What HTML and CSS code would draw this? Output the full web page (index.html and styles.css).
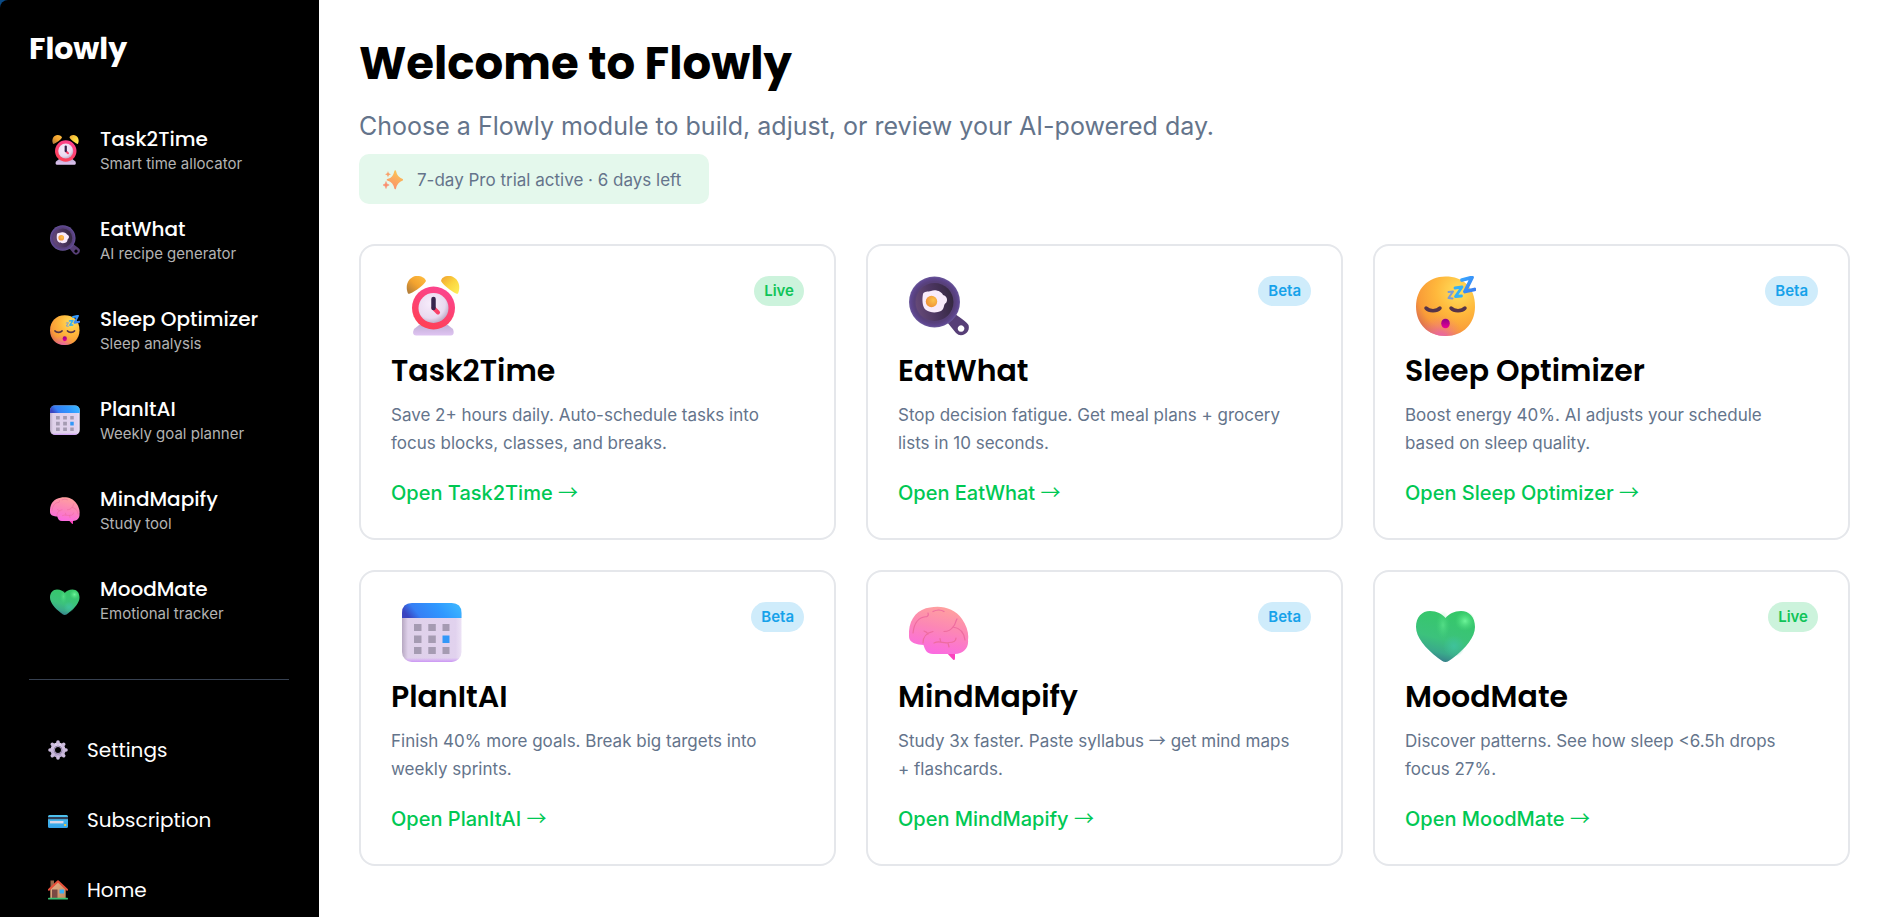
FILE: index.html
```html
<!DOCTYPE html>
<html lang="en">
<head>
<meta charset="UTF-8">
<meta name="viewport" content="width=device-width, initial-scale=1.0">
<title>Flowly</title>
<link rel="stylesheet" href="styles.css">
</head>
<body>

<!-- Icon definitions -->
<svg class="icon-defs" aria-hidden="true">
    <defs>
        <linearGradient id="bellLeft" x1="0" y1="1" x2="1" y2="0">
            <stop offset="0" stop-color="#a8783c"/>
            <stop offset="0.5" stop-color="#f3a32f"/>
            <stop offset="1" stop-color="#ffc043"/>
        </linearGradient>
        <linearGradient id="bellRight" x1="0" y1="0" x2="1" y2="1">
            <stop offset="0" stop-color="#f0a030"/>
            <stop offset="0.5" stop-color="#fbd53f"/>
            <stop offset="1" stop-color="#fff05a"/>
        </linearGradient>
        <linearGradient id="clockRing" x1="0.7" y1="0" x2="0.3" y2="1">
            <stop offset="0" stop-color="#fb4490"/>
            <stop offset="1" stop-color="#ff4053"/>
        </linearGradient>
        <radialGradient id="clockFace" cx="0.4" cy="0.35" r="0.7">
            <stop offset="0" stop-color="#f7ecfb"/>
            <stop offset="0.7" stop-color="#e9daf0"/>
            <stop offset="1" stop-color="#b9a4c0"/>
        </radialGradient>
        <linearGradient id="clockBase" x1="0" y1="0" x2="0" y2="1">
            <stop offset="0" stop-color="#bba9cf"/>
            <stop offset="1" stop-color="#dfc4f2"/>
        </linearGradient>
        <radialGradient id="panRim" cx="0.5" cy="0.5" r="0.5">
            <stop offset="0.8" stop-color="#57407a"/>
            <stop offset="0.93" stop-color="#5e468f"/>
            <stop offset="1" stop-color="#6c5b9c"/>
        </radialGradient>
        <linearGradient id="panInner" x1="0" y1="0.6" x2="1" y2="0.4">
            <stop offset="0" stop-color="#664a78"/>
            <stop offset="0.5" stop-color="#4b3560"/>
            <stop offset="1" stop-color="#34283f"/>
        </linearGradient>
        <radialGradient id="yolk" cx="0.65" cy="0.4" r="0.7">
            <stop offset="0" stop-color="#fcc34e"/>
            <stop offset="1" stop-color="#ee8e35"/>
        </radialGradient>
        <radialGradient id="sleepFace" cx="0.72" cy="0.25" r="0.85">
            <stop offset="0" stop-color="#ffe05c"/>
            <stop offset="0.45" stop-color="#ffb83c"/>
            <stop offset="0.8" stop-color="#f99c38"/>
            <stop offset="1" stop-color="#dc6f50"/>
        </radialGradient>
        <radialGradient id="sleepGlow" cx="0.42" cy="1.05" r="0.4">
            <stop offset="0" stop-color="#e85cc0"/>
            <stop offset="1" stop-color="#f07a80" stop-opacity="0"/>
        </radialGradient>
        <linearGradient id="mouth" x1="0" y1="0" x2="0" y2="1">
            <stop offset="0" stop-color="#8f0087"/>
            <stop offset="1" stop-color="#ea0095"/>
        </linearGradient>
        <linearGradient id="zed" x1="0" y1="0" x2="1" y2="1">
            <stop offset="0" stop-color="#38a6ff"/>
            <stop offset="1" stop-color="#3b7cf0"/>
        </linearGradient>
        <linearGradient id="calTop" x1="0" y1="0.4" x2="1" y2="0.2">
            <stop offset="0" stop-color="#3a44c0"/>
            <stop offset="0.2" stop-color="#367ff5"/>
            <stop offset="0.6" stop-color="#2f98ff"/>
            <stop offset="1" stop-color="#3db8ff"/>
        </linearGradient>
        <linearGradient id="calSide" x1="0" y1="0" x2="1" y2="0">
            <stop offset="0" stop-color="#b7a8c2"/>
            <stop offset="0.1" stop-color="#dfd1ea"/>
            <stop offset="0.9" stop-color="#e1d2ee"/>
            <stop offset="1" stop-color="#ece2f5"/>
        </linearGradient>
        <linearGradient id="calFoot" x1="0" y1="0" x2="0" y2="1">
            <stop offset="0.93" stop-color="#cf9df5" stop-opacity="0"/>
            <stop offset="1" stop-color="#cb95f5"/>
        </linearGradient>
        <linearGradient id="brain" x1="0.65" y1="0" x2="0.35" y2="1">
            <stop offset="0" stop-color="#ffa29d"/>
            <stop offset="0.45" stop-color="#fc87b5"/>
            <stop offset="1" stop-color="#fb69e3"/>
        </linearGradient>
        <linearGradient id="heart" x1="0.6" y1="0" x2="0.3" y2="1">
            <stop offset="0" stop-color="#35c868"/>
            <stop offset="0.55" stop-color="#3cc27c"/>
            <stop offset="0.8" stop-color="#3aa98b"/>
            <stop offset="1" stop-color="#37758a"/>
        </linearGradient>
        <radialGradient id="heartShine" cx="0.5" cy="0.5" r="0.5">
            <stop offset="0" stop-color="#6ef59a"/>
            <stop offset="1" stop-color="#4bdc7c" stop-opacity="0"/>
        </radialGradient>
        <radialGradient id="heartDeep" cx="0.5" cy="0.5" r="0.5">
            <stop offset="0" stop-color="#3fc29b"/>
            <stop offset="1" stop-color="#3fc29b" stop-opacity="0"/>
        </radialGradient>
        <linearGradient id="gear" x1="0" y1="0" x2="0" y2="1">
            <stop offset="0" stop-color="#dccdea"/>
            <stop offset="1" stop-color="#b5a3cb"/>
        </linearGradient>
        <linearGradient id="cardBlue" x1="0" y1="0" x2="0" y2="1">
            <stop offset="0" stop-color="#4fc3ee"/>
            <stop offset="1" stop-color="#35a2e8"/>
        </linearGradient>
        <linearGradient id="houseWall" x1="0" y1="0" x2="1" y2="1">
            <stop offset="0" stop-color="#e9b48a"/>
            <stop offset="1" stop-color="#c08a62"/>
        </linearGradient>
        <linearGradient id="spark" x1="0.7" y1="0" x2="0.3" y2="1">
            <stop offset="0" stop-color="#fbc652"/>
            <stop offset="1" stop-color="#fb8f6c"/>
        </linearGradient>

        <symbol id="icon-clock" viewBox="-4 0 60 60">
            <path d="M17 46 L8 53 Q5.500 59 10 59.500 H45 Q49 59 47 53 L38 46Z" fill="url(#clockBase)"/>
            <path d="M2 17.500 C-2 8 4 0 11 0 C16 0 19 2 20 5 C18 9 10 15 4 17.500 Q2.700 18 2 17.500Z" fill="url(#bellLeft)"/>
            <path d="M52 17.500 C56 8 50 0 43 0 C38 0 35.500 2 35 5 C37 9 45 15 50 17.500 Q51.300 18 52 17.500Z" fill="url(#bellRight)"/>
            <circle cx="27.500" cy="32" r="21.500" fill="url(#clockRing)"/>
            <circle cx="27.500" cy="32" r="15" fill="url(#clockFace)"/>
            <path d="M27.500 32 L32 36.500" stroke="#fa4168" stroke-width="4" stroke-linecap="round"/>
            <path d="M27.500 23 V32" stroke="#37244d" stroke-width="4.500" stroke-linecap="round"/>
        </symbol>

        <symbol id="icon-pan" viewBox="0 0 60 60">
            <path fill-rule="evenodd" d="M38 46 L47 57 Q51 61 56 58 Q61 55 59.500 49 Q58.500 46.500 46 38Z M52 49.200 a3.300 3.300 0 1 0 0.100 0Z" fill="#573f77"/>
            <circle cx="25.500" cy="26" r="25.500" fill="url(#panRim)"/>
            <circle cx="25.500" cy="26" r="19" fill="url(#panInner)"/>
            <path d="M14 18 C15 15 19 16 22 15 C27 13 33 16 34 19 C38 20 39 24 37 27 C34 28 36 33 32 35 C28 37 21 37 17 34 C13 31 13 23 14 18Z" fill="#f8ebfb"/>
            <circle cx="22.500" cy="25.500" r="5.700" fill="url(#yolk)"/>
        </symbol>

        <symbol id="icon-sleep" viewBox="0 0 60 60">
            <path d="M29.500 0.500 C47 0.500 59 11 59 30.500 C59 48 47 60 29.500 60 C12 60 0 48 0 30.500 C0 13 12 0.500 29.500 0.500Z" fill="url(#sleepFace)"/>
            <path d="M29.500 0.500 C47 0.500 59 11 59 30.500 C59 48 47 60 29.500 60 C12 60 0 48 0 30.500 C0 13 12 0.500 29.500 0.500Z" fill="url(#sleepGlow)"/>
            <path d="M10 32 C13 35.500 21 35.500 24 32 M35 32 C38 35.500 46 35.500 49 32" fill="none" stroke="#563448" stroke-width="3.500" stroke-linecap="round"/>
            <ellipse cx="29.500" cy="47.500" rx="4.300" ry="4.800" fill="url(#mouth)"/>
            <path d="M46 4 L56 1.500 L49 15.500 L58.500 13.500" fill="none" stroke="url(#zed)" stroke-width="3.800" stroke-linejoin="round" stroke-linecap="round"/>
            <path d="M39 12 L46 11 L39.500 20.500 L45.500 20" fill="none" stroke="#35b0f5" stroke-width="2.800" stroke-linejoin="round" stroke-linecap="round"/>
            <path d="M32.500 16 L37 15.500 L32.500 22 L36.500 22.500" fill="none" stroke="#7c9bd6" stroke-width="2" stroke-linejoin="round" stroke-linecap="round"/>
        </symbol>

        <symbol id="icon-calendar" viewBox="0 0 60 60">
            <rect x="0" y="1" width="59.500" height="59" rx="10" fill="url(#calSide)"/>
            <rect x="0" y="1" width="59.500" height="59" rx="10" fill="url(#calFoot)"/>
            <path d="M0 16 V11 Q0 1 10 1 H49.500 Q59.500 1 59.500 11 V16Z" fill="url(#calTop)"/>
            <path d="M12 22 h7.500 v7 h-7.500Z M26.300 22 h7.500 v7 h-7.500Z M40.500 22 h7 v7 h-7Z M12 33.500 h7.500 v7.500 h-7.500Z M26.300 33.500 h7.500 v7.500 h-7.500Z M12 45 h7.500 v7 h-7.500Z M26.300 45 h7.500 v7 h-7.500Z M40.500 45 h7 v7 h-7Z" fill="#a59bb2"/>
            <path d="M40.500 33.500 h7 v7.500 h-7Z" fill="#3398f8"/>
        </symbol>

        <symbol id="icon-brain" viewBox="0 0 60 60">
            <path d="M36 49 L44 57.500 Q46 59 46 56 L46 49Z" fill="#fb42bd"/>
            <path d="M0 34 C-1 18 8 7 21 5.500 C32 3 46 6 53 17 C58 24 60 32 59 38 C60 46 54 52 46 52 L24 52 C18 52 16 48 14.500 43 C11 43 8 42 6 41.500 C2 40 0 38 0 34Z" fill="url(#brain)"/>
            <g fill="none" stroke="#ee6c9f" stroke-width="1.200" stroke-linecap="round">
                <path d="M4 31 C5 21 10 15 18 14.500 M18 14.500 Q20 13.500 19 11"/>
                <path d="M24 9.500 Q30 6.500 35 9.500"/>
                <path d="M48 17 C46 20 47 22 44 25 C42 28 38 29.500 35 29.500 M44 25 C51 26 55 30 56 38"/>
                <path d="M14 41 C14 35 17 31 24 29.500 M19 32 Q18 30 15 29"/>
                <path d="M25 41 C31 38 34 42 40 40.500 C44 40.500 47 40 47 36 M32 40 Q31 38 31 36.500 M39 41 L40 45"/>
            </g>
        </symbol>

        <symbol id="icon-heart" viewBox="0 0 60 60">
            <path d="M29.500 60 C27 60 25 58 22 56 C9 46 0 35 0 25 C0 15 6 9 14 9 C21 9 26 12 29.500 16 C33 12 38 9 45 9 C53 9 59 15 59 25 C59 35 50 46 37 56 C34 58 32 60 29.500 60Z" fill="url(#heart)"/>
            <ellipse cx="27" cy="23" rx="7" ry="14" fill="url(#heartShine)" opacity="0.5"/>
            <circle cx="49" cy="19" r="10" fill="url(#heartShine)"/>
            <circle cx="38" cy="44" r="11" fill="url(#heartDeep)"/>
        </symbol>

        <symbol id="icon-gear" viewBox="0 0 20 20">
            <circle cx="10" cy="10" r="5.300" fill="none" stroke="url(#gear)" stroke-width="4.600"/>
            <g stroke="#cdbcdd" stroke-width="3.600" stroke-linecap="round">
                <path d="M10 2 V3 M10 17 V18 M2 10 H3 M17 10 H18 M4.300 4.300 L5 5 M15 15 L15.700 15.700 M4.300 15.700 L5 15 M15 5 L15.700 4.300"/>
            </g>
            <circle cx="10" cy="10" r="4" fill="none" stroke="#9484a8"/>
        </symbol>

        <symbol id="icon-card" viewBox="0 0 20 20">
            <rect x="0" y="5" width="20" height="13" rx="1.500" fill="url(#cardBlue)"/>
            <rect x="0" y="7" width="20" height="2.200" fill="#2f3d55"/>
            <rect x="2" y="11" width="13.500" height="2.400" fill="#dcd6e6"/>
            <rect x="16" y="14" width="2.300" height="2" rx="0.800" fill="#f5c842"/>
        </symbol>

        <symbol id="icon-home" viewBox="0 0 20 20">
            <rect x="2.500" y="0.500" width="3.500" height="8" fill="#98684a"/>
            <path d="M2.300 9 L10 1.500 L17.700 9 V18.500 H2.300Z" fill="url(#houseWall)"/>
            <path d="M0.900 9.800 L10 1.200 L19.100 9.800" fill="none" stroke="#e8503a" stroke-width="2" stroke-linejoin="round" stroke-linecap="round"/>
            <rect x="4" y="9.500" width="5.500" height="8.500" fill="#7a4a44"/>
            <rect x="11.500" y="9.500" width="4.500" height="4" fill="#38aef5"/>
            <rect x="0" y="17.700" width="20" height="1.900" rx="0.900" fill="#38c172"/>
        </symbol>

        <symbol id="icon-sparkles" viewBox="0 0 20 20">
            <path d="M12.200 1 C13.200 6 15 8.500 19.500 9.800 C15 11.300 13.200 13.700 12.200 18.500 C11 13.700 9.500 11.300 4.500 9.800 C9.500 8.500 11 6 12.200 1Z" fill="url(#spark)" stroke="url(#spark)" stroke-width="1.500" stroke-linejoin="round"/>
            <path d="M5 1 C5.400 3 6 3.700 8 4.200 C6 4.700 5.400 5.500 5 7.500 C4.600 5.500 4 4.700 2 4.200 C4 3.700 4.600 3 5 1Z" fill="#f9a26b"/>
            <path d="M3 11.500 C3.400 13.600 4 14.400 6.200 15 C4 15.600 3.400 16.400 3 18.500 C2.600 16.400 2 15.600 0 15 C2 14.400 2.600 13.600 3 11.500Z" fill="#fa8f6e" stroke="#fa8f6e" stroke-width="0.600"/>
        </symbol>
    </defs>
</svg>

<div class="layout">
    <aside class="sidebar">
        <div class="logo">Flowly</div>

        <nav class="modules-nav">
            <a href="#task2time" class="nav-item">
                <svg class="nav-icon"><use href="#icon-clock"/></svg>
                <span class="nav-text">
                    <span class="nav-name">Task2Time</span>
                    <span class="nav-sub">Smart time allocator</span>
                </span>
            </a>
            <a href="#eatwhat" class="nav-item">
                <svg class="nav-icon"><use href="#icon-pan"/></svg>
                <span class="nav-text">
                    <span class="nav-name">EatWhat</span>
                    <span class="nav-sub">AI recipe generator</span>
                </span>
            </a>
            <a href="#sleep" class="nav-item">
                <svg class="nav-icon"><use href="#icon-sleep"/></svg>
                <span class="nav-text">
                    <span class="nav-name">Sleep Optimizer</span>
                    <span class="nav-sub">Sleep analysis</span>
                </span>
            </a>
            <a href="#planitai" class="nav-item">
                <svg class="nav-icon"><use href="#icon-calendar"/></svg>
                <span class="nav-text">
                    <span class="nav-name">PlanItAI</span>
                    <span class="nav-sub">Weekly goal planner</span>
                </span>
            </a>
            <a href="#mindmapify" class="nav-item">
                <svg class="nav-icon"><use href="#icon-brain"/></svg>
                <span class="nav-text">
                    <span class="nav-name">MindMapify</span>
                    <span class="nav-sub">Study tool</span>
                </span>
            </a>
            <a href="#moodmate" class="nav-item">
                <svg class="nav-icon"><use href="#icon-heart"/></svg>
                <span class="nav-text">
                    <span class="nav-name">MoodMate</span>
                    <span class="nav-sub">Emotional tracker</span>
                </span>
            </a>
        </nav>

        <nav class="bottom-nav">
            <a href="#settings" class="bottom-item">
                <svg class="small-icon"><use href="#icon-gear"/></svg>
                Settings
            </a>
            <a href="#subscription" class="bottom-item">
                <svg class="small-icon"><use href="#icon-card"/></svg>
                Subscription
            </a>
            <a href="#home" class="bottom-item">
                <svg class="small-icon"><use href="#icon-home"/></svg>
                Home
            </a>
        </nav>
    </aside>

    <main class="main">
        <h1>Welcome to Flowly</h1>
        <p class="subtitle">Choose a Flowly module to build, adjust, or review your AI-powered day.</p>
        <div class="trial-banner">
            <svg class="small-icon"><use href="#icon-sparkles"/></svg>
            <span>7-day Pro trial active · 6 days left</span>
        </div>

        <div class="cards">
            <div class="card" id="task2time">
                <div class="card-top">
                    <svg class="card-icon"><use href="#icon-clock"/></svg>
                    <span class="badge live">Live</span>
                </div>
                <h2>Task2Time</h2>
                <p>Save 2+ hours daily. Auto-schedule tasks into focus blocks, classes, and breaks.</p>
                <a href="#task2time" class="card-link">Open Task2Time <span class="arrow">→</span></a>
            </div>
            <div class="card" id="eatwhat">
                <div class="card-top">
                    <svg class="card-icon"><use href="#icon-pan"/></svg>
                    <span class="badge beta">Beta</span>
                </div>
                <h2>EatWhat</h2>
                <p>Stop decision fatigue. Get meal plans + grocery lists in 10 seconds.</p>
                <a href="#eatwhat" class="card-link">Open EatWhat <span class="arrow">→</span></a>
            </div>
            <div class="card" id="sleep">
                <div class="card-top">
                    <svg class="card-icon"><use href="#icon-sleep"/></svg>
                    <span class="badge beta">Beta</span>
                </div>
                <h2>Sleep Optimizer</h2>
                <p>Boost energy 40%. AI adjusts your schedule based on sleep quality.</p>
                <a href="#sleep" class="card-link">Open Sleep Optimizer <span class="arrow">→</span></a>
            </div>
            <div class="card" id="planitai">
                <div class="card-top">
                    <svg class="card-icon"><use href="#icon-calendar"/></svg>
                    <span class="badge beta">Beta</span>
                </div>
                <h2>PlanItAI</h2>
                <p>Finish 40% more goals. Break big targets into weekly sprints.</p>
                <a href="#planitai" class="card-link">Open PlanItAI <span class="arrow">→</span></a>
            </div>
            <div class="card" id="mindmapify">
                <div class="card-top">
                    <svg class="card-icon"><use href="#icon-brain"/></svg>
                    <span class="badge beta">Beta</span>
                </div>
                <h2>MindMapify</h2>
                <p>Study 3x faster. Paste syllabus <span class="arrow">→</span> get mind maps + flashcards.</p>
                <a href="#mindmapify" class="card-link">Open MindMapify <span class="arrow">→</span></a>
            </div>
            <div class="card" id="moodmate">
                <div class="card-top">
                    <svg class="card-icon"><use href="#icon-heart"/></svg>
                    <span class="badge live">Live</span>
                </div>
                <h2>MoodMate</h2>
                <p>Discover patterns. See how sleep &lt;6.5h drops focus 27%.</p>
                <a href="#moodmate" class="card-link">Open MoodMate <span class="arrow">→</span></a>
            </div>
        </div>
    </main>
</div>

</body>
</html>
```
FILE: styles.css
```css
* {
    box-sizing: border-box;
}
body {
    font-family: Inter, sans-serif;
    margin: 0;
    background-color: #fff;
    color: #000;
}
a {
    text-decoration: none;
}
.icon-defs {
    position: absolute;
    width: 0;
    height: 0;
}
.layout {
    display: flex;
    min-height: 100vh;
    background-color: #0a4a85;
}

/* Sidebar */
.sidebar {
    position: sticky;
    top: 0;
    flex: 0 0 319px;
    height: 100vh;
    padding: 31px 30px 0 29px;
    border-top-left-radius: 8px;
    background-color: #000;
    color: #fff;
    overflow-y: auto;
    scrollbar-width: none;
}
.logo {
    font-family: Poppins, Inter, sans-serif;
    font-size: 30px;
    font-weight: 700;
    line-height: 36px;
    margin-bottom: 38px;
}
.nav-item {
    display: flex;
    align-items: center;
    gap: 20px;
    padding: 20px 21px;
    color: #fff;
}
.nav-icon {
    width: 30px;
    height: 30px;
    flex-shrink: 0;
}
.nav-text {
    display: flex;
    flex-direction: column;
    white-space: nowrap;
}
.nav-name {
    font-family: Poppins, Inter, sans-serif;
    font-size: 20px;
    font-weight: 500;
    line-height: 28px;
}
.nav-sub {
    font-size: 15px;
    line-height: 22px;
    color: #b3b3b3;
}
.bottom-nav {
    margin-top: 34px;
    padding-top: 35px;
    border-top: 1px solid #374151;
}
.bottom-item {
    display: flex;
    align-items: center;
    gap: 19px;
    padding: 20px 19px;
    font-family: Poppins, Inter, sans-serif;
    font-size: 20px;
    line-height: 30px;
    color: #fff;
}
.small-icon {
    width: 20px;
    height: 20px;
    flex-shrink: 0;
}

/* Main content */
.main {
    flex: 1;
    min-width: 0;
    padding: 34px 36px 40px 40px;
    background-color: #fff;
}
h1 {
    font-family: Poppins, Inter, sans-serif;
    font-size: 45px;
    font-weight: 700;
    line-height: 60px;
    margin: 0 0 14px;
}
.subtitle {
    font-size: 25px;
    line-height: 36px;
    margin: 0 0 10px;
    color: #64748b;
}
.trial-banner {
    display: inline-flex;
    align-items: center;
    gap: 14px;
    padding: 11px 28px 9px 24px;
    border-radius: 10px;
    background-color: #e4f8ec;
    color: #64748b;
    font-size: 17px;
    line-height: 30px;
}
.cards {
    display: grid;
    grid-template-columns: repeat(3, 1fr);
    gap: 30px;
    margin-top: 40px;
}
.card {
    padding: 30px;
    border: 2px solid #e5e7eb;
    border-radius: 16px;
    background-color: #fff;
}
.card-top {
    display: flex;
    justify-content: space-between;
    align-items: flex-start;
    padding-left: 11px;
    margin-bottom: 16px;
}
.card-icon {
    width: 60px;
    height: 60px;
}
.badge {
    padding: 0 10px;
    border-radius: 15px;
    font-size: 15px;
    font-weight: 600;
    line-height: 30px;
}
.live {
    background-color: #ccf3dc;
    color: #0fc458;
}
.beta {
    background-color: #cfecfb;
    color: #16a2ea;
}
.card h2 {
    font-family: Poppins, Inter, sans-serif;
    font-size: 30px;
    font-weight: 600;
    line-height: 38px;
    margin: 0 0 11px;
}
.card p {
    font-size: 17px;
    line-height: 28px;
    margin: 0 0 21px;
    padding-right: 10px;
    color: #64748b;
}
.card-link {
    display: block;
    font-size: 20px;
    font-weight: 500;
    line-height: 30px;
    color: #00c853;
}
.arrow {
    font-family: "Noto Sans CJK SC", sans-serif;
    font-weight: 400;
    line-height: 1;
}
```
